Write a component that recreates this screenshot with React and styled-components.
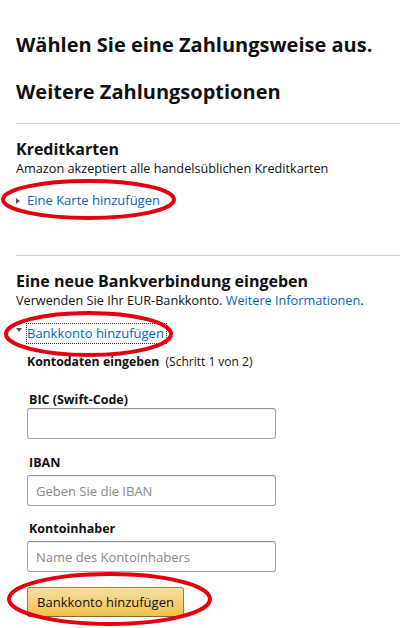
import React from 'react';
import styled, { createGlobalStyle } from 'styled-components';

const GlobalStyle = createGlobalStyle`
  html, body {
    margin: 0;
    padding: 0;
    background: #fff;
  }
  body {
    font-family: 'Open Sans', 'Noto Sans', Arial, sans-serif;
    color: #111;
  }
`;

const Page = styled.div`
  position: relative;
  width: 400px;
  height: 628px;
  overflow: hidden;
  padding-top: 31px;
  box-sizing: border-box;
`;

const Heading = styled.h1`
  margin: 0 0 ${(p) => p.$gap || 0}px 16px;
  font-size: 20px;
  line-height: 28px;
  font-weight: 700;
`;

const Divider = styled.hr`
  margin: 0 0 0 16px;
  border: none;
  border-top: 1px solid #d0d0d0;
  height: 0;
`;

const Section = styled.section`
  padding: 15px 0 0 16px;
  height: ${(p) => (p.$height ? `${p.$height}px` : 'auto')};
  box-sizing: border-box;
`;

const SectionTitle = styled.h2`
  margin: 0;
  font-size: 16px;
  line-height: 20px;
  font-weight: 700;
`;

const Text = styled.p`
  margin: 0;
  font-size: 12.7px;
  line-height: 19px;
`;

const Link = styled.a`
  color: #0066c0;
  text-decoration: none;
`;

const Expander = styled.div`
  display: flex;
  align-items: center;
  gap: 7px;
  margin-top: ${(p) => p.$top}px;
  font-size: 13px;
  line-height: 19px;
`;

const Caret = styled.span`
  width: 0;
  height: 0;
  ${(p) =>
    p.$open
      ? `border-left: 3px solid transparent;
         border-right: 3px solid transparent;
         border-top: 4px solid #555;
         margin-top: -7px;
         margin-right: -2px;`
      : `border-top: 3px solid transparent;
         border-bottom: 3px solid transparent;
         border-left: 4px solid #555;`}
`;

const FocusLink = styled(Link)`
  outline: 1px dotted #333;
  outline-offset: 0;
  padding: 0 2px 0 0;
`;

const Form = styled.div`
  padding-left: 11px;
  margin-top: 10px;
`;

const StepTitle = styled.div`
  font-size: 12.3px;
  line-height: 18px;
  font-weight: 700;
  margin-bottom: 21px;

  span {
    font-weight: 400;
    font-size: 12px;
    margin-left: 3px;
  }
`;

const Field = styled.div`
  margin-bottom: ${(p) => p.$after}px;
`;

const Label = styled.label`
  display: block;
  padding-left: 2px;
  font-size: 12.5px;
  line-height: 16px;
  font-weight: 700;
  margin-bottom: ${(p) => (p.$tight ? 0 : 4)}px;
`;

const Input = styled.input`
  display: block;
  width: 249px;
  height: 31px;
  box-sizing: border-box;
  padding: 3px 8px;
  border: 1px solid #a6a6a6;
  border-top-color: #949494;
  border-radius: 3px;
  box-shadow: 0 1px 0 rgba(255, 255, 255, 0.5), 0 1px 0 rgba(0, 0, 0, 0.07) inset;
  font-family: inherit;
  font-size: 13px;
  color: #111;
  outline: none;

  &::placeholder {
    color: #888;
  }
`;

const Button = styled.button`
  display: block;
  width: 157px;
  height: 30px;
  padding: 0;
  border: 1px solid;
  border-color: #a88734 #9c7e31 #846a29;
  border-radius: 3px;
  background: linear-gradient(to bottom, #f7dfa5, #f0c14b);
  font-family: inherit;
  font-size: 13px;
  color: #111;
  cursor: pointer;
`;

const Annotation = styled.svg`
  position: absolute;
  left: ${(p) => p.$x}px;
  top: ${(p) => p.$y}px;
  overflow: visible;
  pointer-events: none;
`;

function Ring({ x, y, w, h }) {
  return (
    <Annotation $x={x} $y={y} width={w} height={h}>
      <ellipse
        cx={w / 2}
        cy={h / 2}
        rx={w / 2 - 2}
        ry={h / 2 - 2}
        fill="none"
        stroke="#e3000f"
        strokeWidth="4"
      />
    </Annotation>
  );
}

export default function App() {
  return (
    <Page>
      <GlobalStyle />
      <Heading $gap={19}>Wählen Sie eine Zahlungsweise aus.</Heading>
      <Heading $gap={17}>Weitere Zahlungsoptionen</Heading>
      <Divider />

      <Section $height={131}>
        <SectionTitle>Kreditkarten</SectionTitle>
        <Text>Amazon akzeptiert alle handelsüblichen Kreditkarten</Text>
        <Expander $top={13}>
          <Caret />
          <Link href="#">Eine Karte hinzufügen</Link>
        </Expander>
      </Section>
      <Divider />

      <Section>
        <SectionTitle>Eine neue Bankverbindung eingeben</SectionTitle>
        <Text>
          Verwenden Sie Ihr EUR-Bankkonto. <Link href="#">Weitere Informationen</Link>.
        </Text>
        <Expander $top={14}>
          <Caret $open />
          <FocusLink href="#">Bankkonto hinzufügen</FocusLink>
        </Expander>
        <Form>
          <StepTitle>
            Kontodaten eingeben <span>(Schritt 1 von 2)</span>
          </StepTitle>
          <Field $after={16}>
            <Label $tight>BIC (Swift-Code)</Label>
            <Input type="text" />
          </Field>
          <Field $after={15}>
            <Label>IBAN</Label>
            <Input type="text" placeholder="Geben Sie die IBAN" />
          </Field>
          <Field $after={15}>
            <Label>Kontoinhaber</Label>
            <Input type="text" placeholder="Name des Kontoinhabers" />
          </Field>
          <Button type="button">Bankkonto hinzufügen</Button>
        </Form>
      </Section>

      <Ring x={1} y={179} w={175} h={41} />
      <Ring x={4} y={311} w={169} h={46} />
      <Ring x={7} y={572} w={205} h={54} />
    </Page>
  );
}
